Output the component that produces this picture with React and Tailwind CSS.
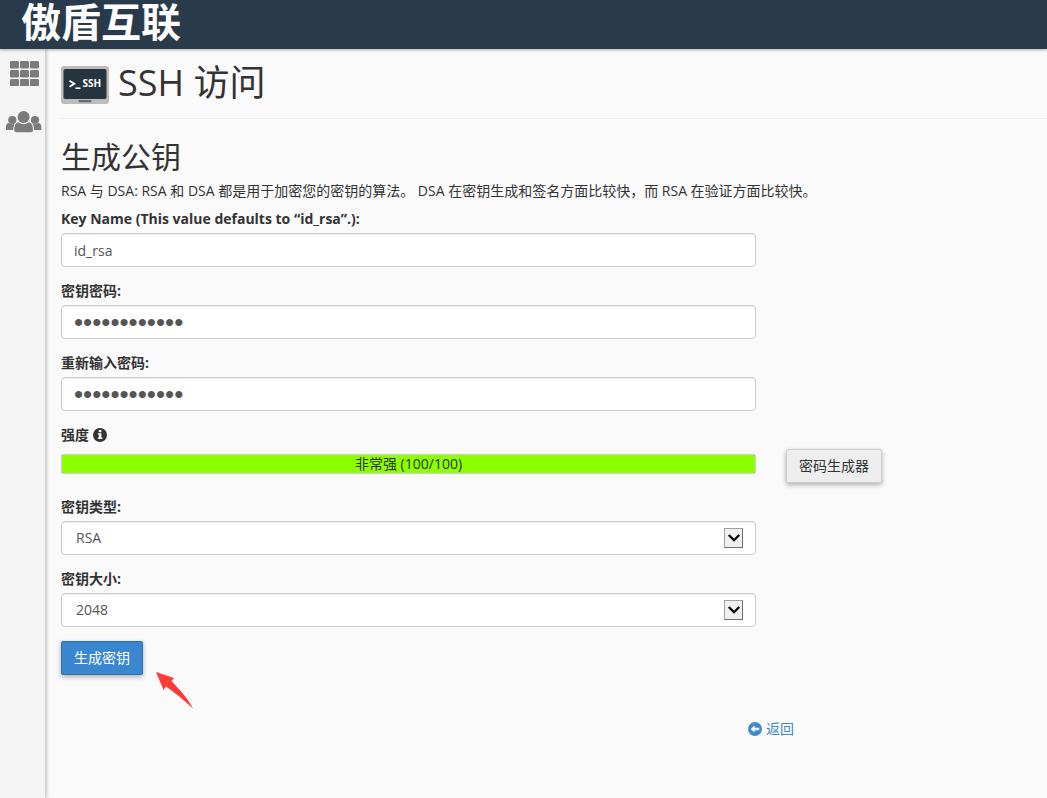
import React from "react";

function GridIcon() {
  const cells = [0, 1, 2];
  return (
    <svg width="29" height="25" viewBox="0 0 29 25" fill="#7b7b7b" aria-hidden="true">
      {cells.map((r) =>
        cells.map((c) => (
          <rect key={`${r}-${c}`} x={c * 10} y={r * 9} width="9" height="7.4" rx="1.2" />
        ))
      )}
    </svg>
  );
}

function UsersIcon() {
  return (
    <svg width="36" height="22" viewBox="0 0 36 22" fill="#7b7b7b" aria-hidden="true">
      <circle cx="6.3" cy="9" r="4.1" />
      <circle cx="29" cy="9" r="4.1" />
      <path d="M0 19v-3.2c0-2.4 1.2-3.8 3-3.8 2 1.5 4.400 1.500 6 .4-1 1-1.500 2.500-1.800 6.600z" />
      <path d="M35.300 19v-3.200c0-2.400-1.200-3.800-3-3.800-2 1.500-4.400 1.500-6 .4 1 1 1.500 2.500 1.800 6.600z" />
      <circle cx="17.600" cy="6" r="6" />
      <path d="M8.300 19.500c0-4.500 1-7.500 4.200-8.200 3 2.500 7.200 2.500 10.200 0 3.200.7 4.300 3.700 4.300 8.200 0 1-1 1.700-2 1.700H10.300c-1 0-2-.7-2-1.700z" />
    </svg>
  );
}

function SshIcon() {
  return (
    <svg width="48" height="38" viewBox="0 0 48 38" aria-hidden="true" className="shrink-0">
      <rect width="48" height="38" rx="3" fill="#bcbcbc" />
      <rect x="2.500" y="3" width="43" height="30" rx="1.800" fill="#25343f" />
      <rect x="17.500" y="34" width="13" height="2.200" rx="1" fill="#6b6b6b" />
      <path d="M8.500 14.800l4.800 3-4.800 3" fill="none" stroke="#fff" strokeWidth="1.900" />
      <path d="M14.500 22.200h5" stroke="#fff" strokeWidth="1.600" />
      <text x="21.500" y="21.300" fill="#fff" fontSize="10" fontWeight="700" fontFamily="Open Sans, sans-serif">
        SSH
      </text>
    </svg>
  );
}

function InfoIcon() {
  return (
    <svg width="14" height="14" viewBox="0 0 14 14" aria-hidden="true">
      <circle cx="7" cy="7" r="7" fill="#333" />
      <path d="M5.800 2h2.600v2.200H5.800zM4.900 5.300h3.500v4.300h1V11H4.900V9.600h1V6.700h-1z" fill="#fafafa" />
    </svg>
  );
}

function BackIcon() {
  return (
    <svg width="14" height="14" viewBox="0 0 14 14" aria-hidden="true">
      <circle cx="7" cy="7" r="7" fill="#428bca" />
      <path d="M2.600 7l4-3.600v2.300h4.600v2.600H6.600v2.300z" fill="#fafafa" />
    </svg>
  );
}

const control =
  "block h-[34px] w-full rounded border border-[#ccc] bg-white text-[#555] shadow-[inset_0_1px_1px_rgba(0,0,0,0.075)] outline-none";

const passwordText = "px-3 font-['Liberation_Sans',sans-serif] text-[26px]";

function Field({ id, label, children }) {
  return (
    <div className="mb-3.5 w-full max-w-[695px]">
      <label htmlFor={id} className="mb-1 block font-bold">
        {label}
      </label>
      {children}
    </div>
  );
}

function Select({ id, options }) {
  return (
    <div className="relative">
      <select id={id} className={`${control} appearance-none px-3.5 text-sm`}>
        {options.map((o) => (
          <option key={o}>{o}</option>
        ))}
      </select>
      <span className="pointer-events-none absolute top-[7px] right-[13px] flex h-5 w-[19px] items-center justify-center border border-[#707070] border-t-[#a0a0a0] border-l-[#a0a0a0] bg-[#f0f0f0]">
        <svg width="12" height="8" viewBox="0 0 12 8" fill="none" stroke="#000" strokeWidth="2.200" aria-hidden="true">
          <path d="M.8 1L6 6.200 11.200 1" />
        </svg>
      </span>
    </div>
  );
}

export default function App() {
  return (
    <div className="flex min-h-screen flex-col overflow-x-hidden bg-[#fafafa] font-['Open_Sans','Noto_Sans_CJK_SC',sans-serif] text-sm leading-5 text-[#333]">
      <header className="relative z-10 flex h-[49px] shrink-0 items-start bg-[#293a4a] pl-[21px] shadow-[0_1px_3px_rgba(0,0,0,0.3)]">
        <a
          href="#home"
          className="font-['Liberation_Sans','Noto_Sans_CJK_SC',sans-serif] text-[40px] leading-[46px] font-bold text-white"
        >
          傲盾互联
        </a>
      </header>

      <div className="flex grow">
        <nav className="flex w-[45px] shrink-0 flex-col items-center gap-[25px] bg-[#f5f5f5] pt-3 pl-[3px] shadow-[1px_0_4px_rgba(0,0,0,0.3)]">
          <a href="#tools" aria-label="工具">
            <GridIcon />
          </a>
          <a href="#users" aria-label="用户">
            <UsersIcon />
          </a>
        </nav>

        <main className="min-w-0 grow pl-4">
          <h1 className="mb-5 flex h-[70px] items-center gap-[9px] border-b border-[#eee] pt-0.5 text-4xl leading-10">
            <SshIcon />
            <span className="pb-1">SSH 访问</span>
          </h1>

          <h2 className="mb-1.5 text-3xl leading-9">生成公钥</h2>
          <p className="mb-2">
            RSA 与 DSA: RSA 和 DSA 都是用于加密您的密钥的算法。 DSA 在密钥生成和签名方面比较快，而 RSA 在验证方面比较快。
          </p>

          <form onSubmit={(e) => e.preventDefault()}>
            <Field id="key-name" label="Key Name (This value defaults to “id_rsa”.):">
              <input id="key-name" type="text" defaultValue="id_rsa" className={`${control} px-3 text-sm`} />
            </Field>
            <Field id="key-password" label="密钥密码:">
              <input id="key-password" type="password" defaultValue="aaaaaaaaaaaa" className={`${control} ${passwordText}`} />
            </Field>
            <Field id="key-confirm" label="重新输入密码:">
              <input id="key-confirm" type="password" defaultValue="aaaaaaaaaaaa" className={`${control} ${passwordText}`} />
            </Field>

            <div className="mb-1 flex items-center gap-1 font-bold">
              <span id="strength-label">强度</span>
              <InfoIcon />
            </div>
            <div className="mb-3.5 flex items-start gap-[30px]">
              <div
                role="meter"
                aria-labelledby="strength-label"
                aria-valuemin={0}
                aria-valuemax={100}
                aria-valuenow={100}
                className="mt-[5px] h-5 w-full max-w-[695px] rounded-xs border border-[#ccc] bg-[#8cff00] text-center leading-[18px]"
              >
                非常强 (100/100)
              </div>
              <button
                type="button"
                className="h-[34px] shrink-0 rounded-xs border border-[#ccc] bg-[#eee] px-3 shadow-[0_2px_5px_rgba(0,0,0,0.3)]"
              >
                密码生成器
              </button>
            </div>

            <Field id="key-type" label="密钥类型:">
              <Select id="key-type" options={["RSA", "DSA"]} />
            </Field>
            <Field id="key-size" label="密钥大小:">
              <Select id="key-size" options={["2048", "4096"]} />
            </Field>

            <div className="relative w-fit">
              <button
                type="submit"
                className="h-[34px] rounded-xs border border-[#2a6fb0] bg-[#3a87cf] px-3 text-white shadow-[0_2px_5px_rgba(0,0,0,0.3)]"
              >
                生成密钥
              </button>
              <svg
                width="38"
                height="37"
                viewBox="0 0 38 37"
                fill="#ff3b38"
                aria-hidden="true"
                className="absolute top-[31px] left-[95px]"
              >
                <path d="M0 0L18 6l-2.500 3C22 16 31 25 37 36.500 28 28 19 21 10 14.500L7.500 18z" />
              </svg>
            </div>
          </form>

          <div className="mt-11 flex w-full max-w-[733px] justify-end">
            <a href="#back" className="flex items-center gap-1 text-[#428bca]">
              <BackIcon />
              <span>返回</span>
            </a>
          </div>
        </main>
      </div>
    </div>
  );
}
